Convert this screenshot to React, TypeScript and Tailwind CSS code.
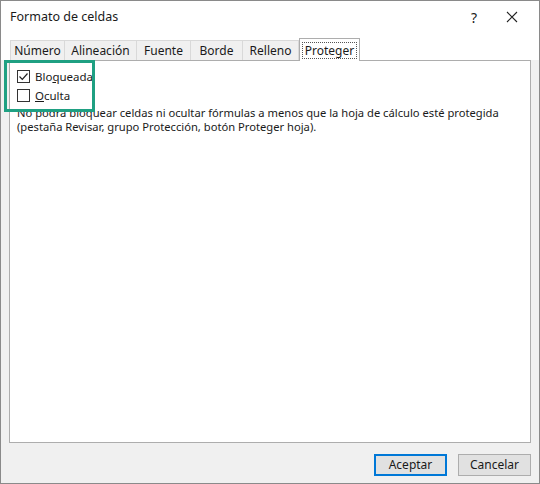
export default function App() {
  const tabs = [
    ["Número", 55],
    ["Alineación", 73],
    ["Fuente", 55],
    ["Borde", 53],
    ["Relleno", 57],
  ] as const;
  return (
    <div className="w-[540px] h-[484px] bg-[#f0f0f0] flex flex-col text-[12px] text-[#1a1a1a] border border-[#8a8a8a] relative" style={{ fontFamily: '"Noto Sans", "Open Sans", sans-serif' }}>
      <div className="h-[32px] bg-white flex items-center px-[9px] shrink-0">
        <span className="text-[12.5px] flex-1">Formato de celdas</span>
        <span className="w-[40px] text-center text-[14px]">?</span>
        <svg width="12" height="12" viewBox="0 0 12 12" className="ml-[12px] mr-[12px]"><path d="M1 1L11 11M11 1L1 11" stroke="#222" strokeWidth="1.1" /></svg>
      </div>
      <div className="h-[6px] bg-white" />
      <div className="flex items-end px-[10px] h-[21px] bg-white">
        {tabs.map(([t, w]) => (
          <div key={t} className="h-[20px] border border-b-0 border-[#d9d9d9] bg-[#f0f0f0] flex items-center justify-center -ml-px" style={{ width: w }}>{t}</div>
        ))}
        <div className="h-[23px] w-[61px] border border-b-0 border-[#adadad] bg-white flex items-center justify-center relative top-px">
          <span className="border border-dotted border-[#555] px-[2px] leading-[15px]">Proteger</span>
        </div>
      </div>
      <div className="mx-[8px] h-[383px] bg-white border border-[#adadad] flex flex-col px-[7px] pt-[6px]">
        <label className="flex items-center gap-[5px] h-[19px]">
          <span className="w-[13px] h-[13px] border border-[#333] flex items-center justify-center">
            <svg width="11" height="11" viewBox="0 0 11 11"><path d="M1.5 5.5L4.3 8.3L9.5 2.5" stroke="#222" strokeWidth="1.2" fill="none" /></svg>
          </span>
          <span className="text-[11.5px]">Blo<u>q</u>ueada</span>
        </label>
        <label className="flex items-center gap-[5px] h-[19px]">
          <span className="w-[13px] h-[13px] border border-[#333]" />
          <span className="text-[11.5px]"><u>O</u>culta</span>
        </label>
        <p className="mt-[1px] leading-[14px] text-[11.2px] whitespace-nowrap">No podrá bloquear celdas ni ocultar fórmulas a menos que la hoja de cálculo esté protegida<br />(pestaña Revisar, grupo Protección, botón Proteger hoja).</p>
      </div>
      <div className="flex justify-end gap-[11px] px-[8px] pt-[11px]">
        <button className="w-[73px] h-[22px] border-2 border-[#0078d7] bg-[#e1e1e1]">Aceptar</button>
        <button className="w-[73px] h-[22px] border border-[#adadad] bg-[#e1e1e1]">Cancelar</button>
      </div>
      <div className="absolute left-[3px] top-[59px] w-[91px] h-[52px] border-[3px] border-[#1fa082]" />
    </div>
  );
}
